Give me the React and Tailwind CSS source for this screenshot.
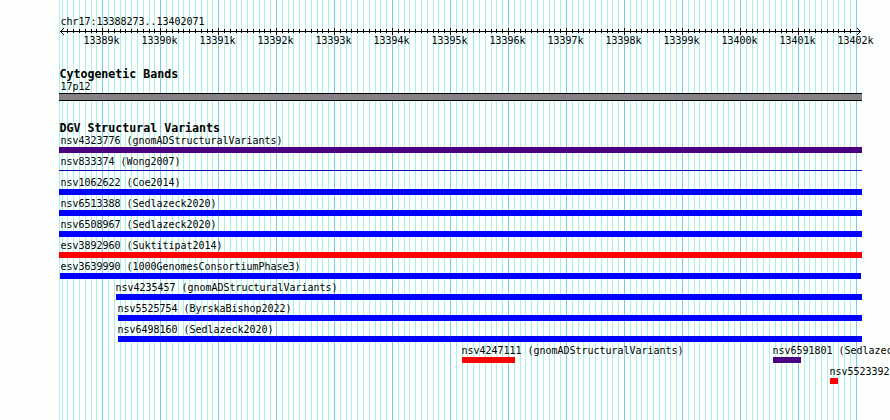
const REGION = { chrom: 'chr17', start: 13388273, end: 13402071 };
const TRACK_LEFT = 60;
const PX_PER_BP = 800 / (REGION.end - REGION.start);

const toX = (position) => Math.round(TRACK_LEFT + (position - REGION.start) * PX_PER_BP);

// One tick every 100bp, a major one every 1kb
const ticks = [];
for (let pos = Math.ceil(REGION.start / 100) * 100; pos <= REGION.end; pos += 100) {
  ticks.push({ pos, x: toX(pos), major: pos % 1000 === 0 });
}

const variants = [
  { id: 'nsv4323776', study: 'gnomADStructuralVariants', from: 59, to: 862, color: 'bg-[#4b0082]' },
  { id: 'nsv833374', study: 'Wong2007', from: 59, to: 862, color: 'bg-[#0000c8]', thin: true },
  { id: 'nsv1062622', study: 'Coe2014', from: 59, to: 862, color: 'bg-[#0000ff]' },
  { id: 'nsv6513388', study: 'Sedlazeck2020', from: 59, to: 862, color: 'bg-[#0000ff]' },
  { id: 'nsv6508967', study: 'Sedlazeck2020', from: 59, to: 862, color: 'bg-[#0000ff]' },
  { id: 'esv3892960', study: 'Suktitipat2014', from: 59, to: 862, color: 'bg-[#ff0000]' },
  { id: 'esv3639990', study: '1000GenomesConsortiumPhase3', from: 60, to: 861, color: 'bg-[#0000ff]' },
  { id: 'nsv4235457', study: 'gnomADStructuralVariants', from: 116, to: 862, color: 'bg-[#0000ff]' },
  { id: 'nsv5525754', study: 'ByrskaBishop2022', from: 118, to: 862, color: 'bg-[#0000ff]' },
  { id: 'nsv6498160', study: 'Sedlazeck2020', from: 118, to: 862, color: 'bg-[#0000ff]' },
];

const lowerVariants = [
  [
    { id: 'nsv4247111', study: 'gnomADStructuralVariants', from: 462, to: 515, color: 'bg-[#ff0000]' },
    { id: 'nsv6591801', study: 'Sedlazeck2020', from: 773, to: 801, color: 'bg-[#4b0082]' },
  ],
  [{ id: 'nsv5523392', study: 'Sedlazeck2020', from: 830, to: 838, color: 'bg-[#ff0000]' }],
];

const rows = [...variants.map((variant) => [variant]), ...lowerVariants];

const GridLines = () => (
  <svg className="absolute inset-0" width="890" height="420" shapeRendering="crispEdges">
    <rect x="59" y="0" width="1" height="420" fill="#a9efeb" />
    {ticks.map(({ pos, x, major }) => (
      <rect key={pos} x={x} y="0" width="1" height="420" fill={major ? '#7cc8ee' : '#a9efeb'} />
    ))}
  </svg>
);

const Ruler = () => (
  <svg className="block h-5 w-full shrink-0" viewBox="0 0 890 20" shapeRendering="crispEdges">
    <rect x="60" y="4" width="801" height="1" fill="black" />
    {/* the outermost ticks give way to the arrow heads */}
    {ticks.slice(1, -1).map(({ pos, x, major }) => (
      <rect key={pos} x={x} y={major ? 1 : 2} width="1" height={major ? 7 : 4} fill="black" />
    ))}
    {[0, 1, 2, 3].map((step) => (
      <g key={step}>
        <rect x={60 + step} y={4 - step} width="1" height="1" />
        <rect x={60 + step} y={4 + step} width="1" height="1" />
        <rect x={860 - step} y={4 - step} width="1" height="1" />
        <rect x={860 - step} y={4 + step} width="1" height="1" />
      </g>
    ))}
    {ticks
      .filter((tick) => tick.major)
      .map(({ pos, x }) => (
        <text key={pos} x={x - 18.5} y="17" fontSize="10" letterSpacing="-0.02">
          {`${pos / 1000}k`}
        </text>
      ))}
  </svg>
);

const TrackHeading = ({ children }) => (
  <h2 className="h-3 pl-[59.5px] text-[11.63px] leading-3 font-bold whitespace-nowrap">{children}</h2>
);

const VariantRow = ({ items }) => (
  <div className="grid h-[21px] shrink-0 grid-cols-[890px]">
    {items.map((item) => (
      <div
        key={item.id}
        className="col-start-1 row-start-1 w-0"
        style={{ marginLeft: item.from }}
      >
        <div
          className={`h-[15px] pt-[3px] leading-3 whitespace-nowrap ${item.from < 61 ? '' : '-ml-px'}`}
          style={{ textIndent: item.from === 59 ? 1.4 : 0.4 }}
        >
          {item.id} ({item.study})
        </div>
        <div
          className={`${item.color} ${item.thin ? 'mt-0.5 h-px' : 'h-1.5'}`}
          style={{ width: item.to - item.from }}
        />
      </div>
    ))}
  </div>
);

export default function App() {
  return (
    <div className="relative h-[420px] w-[890px] overflow-hidden bg-[#fdfffc] font-['DejaVu_Sans_Mono',monospace] text-[10px] tracking-[-0.02px] text-black">
      <GridLines />
      <main className="relative flex h-full flex-col">
        <div className="h-[27px] shrink-0 pt-4 pl-[60.4px] leading-3">
          {REGION.chrom}:{REGION.start}..{REGION.end}
        </div>
        <Ruler />
        <section className="mt-[21px] h-[33px] shrink-0">
          <TrackHeading>Cytogenetic Bands</TrackHeading>
          <div className="h-[13px] pt-px pl-[60.4px] leading-3">17p12</div>
          <div className="ml-[59px] h-2 w-[803px] border-y border-black bg-[#848284]" />
        </section>
        <section className="mt-[21px]">
          <TrackHeading>DGV Structural Variants</TrackHeading>
          <div className="-mt-0.5 flex flex-col">
            {rows.map((items) => (
              <VariantRow key={items[0].id} items={items} />
            ))}
          </div>
        </section>
      </main>
    </div>
  );
}
